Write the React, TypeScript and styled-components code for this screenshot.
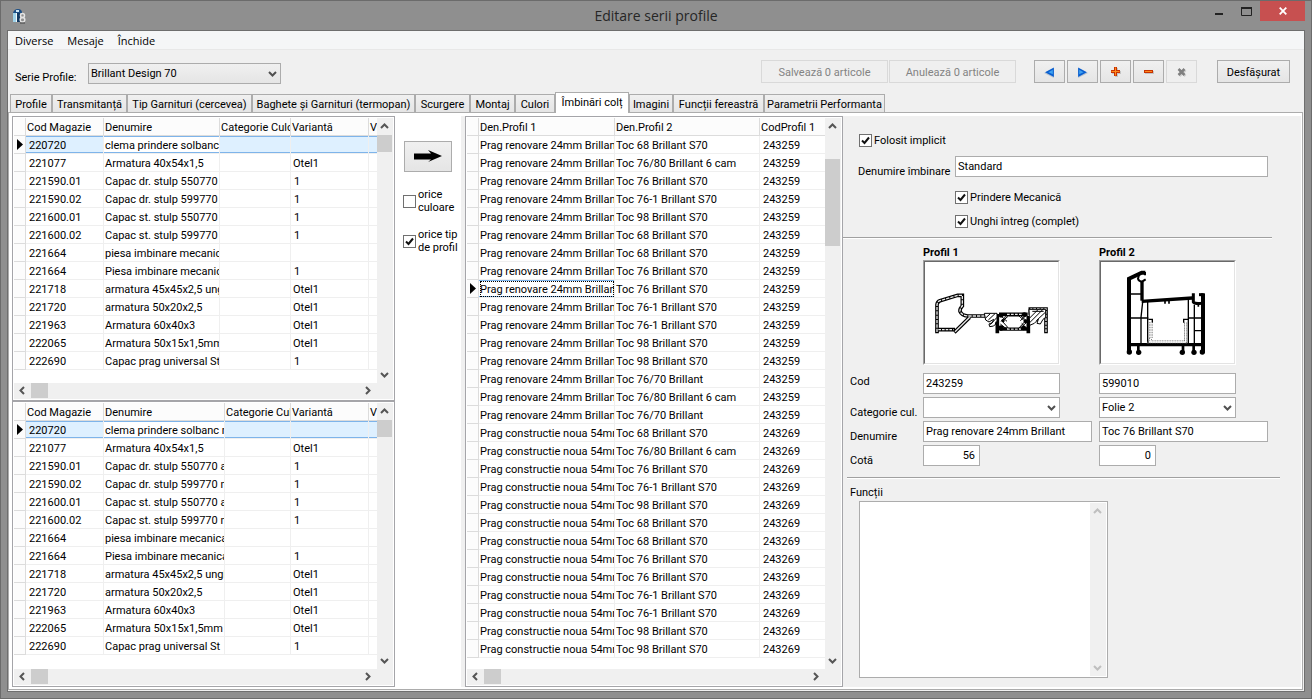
import React from 'react';
import styled, { createGlobalStyle, css } from 'styled-components';

const uiFont = 'Roboto, "Noto Sans", sans-serif';
const systemFont = '"Open Sans", "Noto Sans", sans-serif';

const GlobalStyle = createGlobalStyle`
  *, *::before, *::after { box-sizing: border-box; }
  body { margin: 0; background: #8f8f8f; color: #000; font: 11px/13px ${uiFont}; }
  button, input, select, textarea { font: inherit; color: inherit; margin: 0; border-radius: 0; outline: none; }
`;

/* ---------- window frame ---------- */

const Frame = styled.div`
  display: flex;
  flex-direction: column;
  min-height: 100vh;
  padding: 0 6px 6px;
  border: 1px solid #6b6b6b;
  background: #8f8f8f;
`;

const TitleBar = styled.header`
  display: grid;
  grid-template-columns: 1fr auto 1fr;
  align-items: center;
  height: 29px;
`;

const AppIcon = styled.svg`
  display: block;
  width: 16px;
  height: 16px;
  margin-left: 5px;
`;

const Title = styled.h1`
  margin: 0;
  font: 400 14px/20px ${systemFont};
  color: #262626;
`;

const WindowButtons = styled.div`
  display: flex;
  justify-self: end;
  align-self: start;
`;

const WindowButton = styled.button<{ $close?: boolean }>`
  display: flex;
  align-items: center;
  justify-content: center;
  width: ${p => (p.$close ? 45 : 27)}px;
  height: 20px;
  padding: 0;
  border: 0;
  background: ${p => (p.$close ? '#c75050' : 'transparent')};
`;

const Client = styled.div`
  flex: 1;
  display: flex;
  flex-direction: column;
  border: 1px solid #6e6e6e;
  background: #f0f0f0;
`;

const MenuBar = styled.nav`
  display: flex;
  gap: 14px;
  height: 19px;
  padding: 0 7px;
  background: #f5f6f7;
  border-bottom: 1px solid #e8e8e8;
`;

const MenuItem = styled.button`
  padding: 0;
  border: 0;
  background: none;
  font: 11px/19px ${systemFont};
`;

/* ---------- controls ---------- */

const Toolbar = styled.div`
  display: flex;
  align-items: flex-start;
  height: 44px;
  padding: 10px 14px 0 7px;
`;

const SeriesField = styled.div`
  display: flex;
  align-items: flex-start;
  flex: 1;
  padding-top: 3px;
`;

const SeriesLabel = styled.label`
  width: 73px;
  padding-top: 8px;
`;

const PushButton = styled.button<{ $width: number }>`
  width: ${p => p.$width}px;
  height: 23px;
  padding: 1px 0 0;
  border: 1px solid #acacac;
  background: linear-gradient(#f0f0f0, #e5e5e5);
  white-space: nowrap;
  &:disabled { border-color: #d9d9d9; background: #efefef; color: #838383; }
  svg { display: block; margin: 0 auto; }
`;

const ButtonGroup = styled.div<{ $gap: number; $after?: number }>`
  display: flex;
  gap: ${p => p.$gap}px;
  margin-right: ${p => p.$after || 0}px;
`;

const SelectBox = styled.span<{ $width: number; $flat?: boolean }>`
  position: relative;
  display: block;
  width: ${p => p.$width}px;
  height: 21px;
  select {
    display: block;
    appearance: none;
    width: 100%;
    height: 21px;
    padding: 0 20px 0 2px;
    border: 1px solid #acacac;
    background: ${p => (p.$flat ? '#fff' : 'linear-gradient(#f0f0f0, #e5e5e5)')};
  }
  svg { position: absolute; right: 4px; top: 6px; pointer-events: none; }
`;

const TextInput = styled.input<{ $width: number; $right?: boolean }>`
  display: block;
  width: ${p => p.$width}px;
  height: 21px;
  padding: 0 ${p => (p.$right ? 4 : 2)}px 0 2px;
  border: 1px solid #acacac;
  background: #fff;
  text-align: ${p => (p.$right ? 'right' : 'left')};
`;

const CheckLabel = styled.label`
  display: flex;
  align-items: center;
  gap: 2px;
`;

const CheckBox = styled.span`
  position: relative;
  flex: none;
  width: 13px;
  height: 13px;
  input {
    display: block;
    appearance: none;
    width: 13px;
    height: 13px;
    border: 1px solid #707070;
    background: #fff;
  }
  svg { position: absolute; left: 0; top: 0; pointer-events: none; visibility: hidden; }
  input:checked + svg { visibility: visible; }
`;

/* ---------- tabs ---------- */

const TabStrip = styled.div`
  display: flex;
  align-items: flex-end;
  height: 19px;
  padding-left: 2px;
  margin-bottom: -1px;
`;

const Tab = styled.button<{ $width: number; $active?: boolean }>`
  position: relative;
  flex: none;
  width: ${p => p.$width}px;
  height: 19px;
  padding: 1px 0 0;
  border: 1px solid #acacac;
  background: linear-gradient(#f0f0f0, #e5e5e5);
  white-space: nowrap;
  ${p => p.$active && css`
    height: 21px;
    padding: 0 0 2px;
    border-bottom: 0;
    background: #fff;
  `}
`;

const TabPage = styled.main`
  flex: 1;
  display: flex;
  margin: 0 1px 1px 0;
  padding: 3px 1px 2px 3px;
  border: 1px solid #acacac;
  background: #fff;
`;

/* ---------- data grids ---------- */

const Sidebar = styled.section`
  flex: none;
  display: grid;
  grid-template-rows: 285px minmax(285px, 1fr);
  width: 383px;
`;

const JointsPane = styled.section`
  flex: none;
  display: flex;
`;

const GridBox = styled.div<{ $width: number }>`
  flex: 1;
  display: flex;
  flex-direction: column;
  width: ${p => p.$width}px;
  padding: 1px;
  border: 1px solid #a5a5a9;
  background: #fff;
`;

const GridBody = styled.div`
  flex: 1;
  display: flex;
`;

const GridView = styled.div`
  flex: 1;
  min-width: 0;
  overflow: hidden;
`;

const Table = styled.table`
  width: 100%;
  table-layout: fixed;
  border-collapse: separate;
  border-spacing: 0;
`;

const cell = css`
  height: 18px;
  padding: 2px 0 0 2px;
  overflow: hidden;
  white-space: nowrap;
  text-align: left;
  font-weight: 400;
  line-height: 13px;
  &:last-child { border-right: 0; }
`;

const HeadCell = styled.th`
  ${cell}
  padding-left: 1px;
  background: #fcfcfc;
  border-right: 1px solid #dcdcdc;
  border-bottom: 1px solid #dcdcdc;
`;

const MarkCell = styled.td`
  ${cell}
  padding: 0 0 0 3px;
  background: #fcfcfc;
  border-right: 1px solid #dcdcdc;
  border-bottom: 1px solid #dcdcdc;
  svg { display: block; }
`;

const Cell = styled.td<{ $look?: 'row' | 'edge' | 'focus'; $pad?: number }>`
  ${cell}
  padding-left: ${p => p.$pad ?? 2}px;
  border-right: 1px solid #efefef;
  border-bottom: 1px solid #efefef;
  ${p => p.$look && css`
    box-shadow: inset 0 1px #7eb4ea, inset 0 -1px #7eb4ea;
  `}
  ${p => p.$look === 'row' && css`background: #def0ff;`}
  ${p => p.$look === 'focus' && css`
    outline: 1px dotted #000;
    outline-offset: -2px;
  `}
`;

const VBar = styled.div<{ $before: number }>`
  flex: none;
  display: flex;
  flex-direction: column;
  align-items: flex-start;
  width: 16px;
  background: #f0f0f0;
  .gap { flex: none; height: ${p => p.$before}px; }
  .rest { flex: 1; }
`;

const HBar = styled.div`
  flex: none;
  display: flex;
  align-items: flex-start;
  height: 16px;
  padding-right: 17px;
  background: #f0f0f0;
  .rest { flex: 1; }
`;

const ArrowBox = styled.span<{ $tall?: boolean }>`
  flex: none;
  display: flex;
  align-items: center;
  justify-content: center;
  width: ${p => (p.$tall ? 15 : 17)}px;
  height: ${p => (p.$tall ? 17 : 15)}px;
`;

const Thumb = styled.span<{ $w: number; $h: number }>`
  flex: none;
  width: ${p => p.$w}px;
  height: ${p => p.$h}px;
  background: #cdcdcd;
`;

/* ---------- transfer column ---------- */

const Transfer = styled.section`
  flex: none;
  display: flex;
  flex-direction: column;
  width: 66px;
  padding: 25px 0 0 8px;
  ${CheckLabel} { width: 58px; margin-bottom: 14px; }
`;

const MoveButton = styled.button`
  width: 48px;
  height: 31px;
  margin: 0 0 16px 1px;
  padding: 0;
  border: 1px solid #acacac;
  background: linear-gradient(#f0f0f0, #e5e5e5);
  svg { display: block; margin: 0 auto; }
`;

const Splitter = styled.div`
  flex: none;
  width: 4px;
  background: #f0f0f0;
`;

/* ---------- details ---------- */

const Details = styled.section`
  flex: 1;
  min-width: 440px;
  background: #f0f0f0;
`;

const JoinForm = styled.div`
  display: grid;
  grid-template-columns: 97px minmax(0, 313px);
  padding: 18px 33px 9px 15px;
  align-items: start;
`;

const JoinDefault = styled.div`
  grid-column: 1 / -1;
  padding: 0 0 9px 1px;
`;

const JoinChecks = styled.div`
  grid-column: 2;
  display: grid;
  gap: 11px;
  padding-top: 13px;
`;

const Rule = styled.hr<{ $left: number; $right: number }>`
  margin: 0 ${p => p.$right}px 0 ${p => p.$left}px;
  border: 0;
  height: 2px;
  border-top: 1px solid #a0a0a0;
  background: #fff;
`;

const ProfileForm = styled.div`
  display: grid;
  grid-template-columns: 73px 176px 169px;
  align-items: start;
  padding: 6px 0 8px 7px;
`;

const Caption = styled.h2`
  margin: 0;
  font: 700 11px/15px ${uiFont};
`;

const Picture = styled.div`
  width: 137px;
  height: 105px;
  margin-bottom: 8px;
  border: 1px solid;
  border-color: #a0a0a0 #fff #fff #a0a0a0;
  background: #fff;
  svg {
    display: block;
    width: 135px;
    height: 103px;
    border: 1px solid;
    border-color: #696969 #e3e3e3 #e3e3e3 #696969;
  }
`;

const FieldLabel = styled.label<{ $low?: boolean }>`
  padding-top: ${p => (p.$low ? 9 : 2)}px;
  white-space: nowrap;
`;

const FieldCell = styled.div`
  height: 24px;
`;

const Functions = styled.div`
  padding: 7px 0 0 7px;
`;

const MemoBox = styled.div`
  display: flex;
  width: 249px;
  height: 177px;
  margin: 2px 0 0 9px;
  padding: 1px;
  border: 1px solid #acacac;
  background: #fff;
  textarea { flex: 1; min-width: 0; border: 0; padding: 2px; resize: none; background: #fff; }
`;

/* ---------- drawings ---------- */

const arrowPaths = {
  up: 'M1 6 L4.5 2.5 L8 6',
  down: 'M1 3 L4.5 6.5 L8 3',
  left: 'M6 1 L2.5 4.5 L6 8',
  right: 'M3 1 L6.5 4.5 L3 8',
};

function Chevron({ dir, color = '#555' }: { dir: keyof typeof arrowPaths; color?: string }) {
  return (
    <svg width="9" height="9" viewBox="0 0 9 9" aria-hidden="true">
      <path d={arrowPaths[dir]} fill="none" stroke={color} strokeWidth="2" />
    </svg>
  );
}

function RowMarker() {
  return (
    <svg width="6" height="11" viewBox="0 0 6 11" aria-label="rând curent">
      <path d="M0 0 L6 5.5 L0 11 Z" />
    </svg>
  );
}

function ProfileOne() {
  return (
    <svg viewBox="30 18 399 303" role="img" aria-label="Secțiune Profil 1">
      <g fill="none" stroke="#000" strokeWidth="11" strokeLinejoin="miter">
        <path d="M66 232 V146 Q67 137 75 134 L128 118 H142 V150 Q134 158 135 166 Q140 178 158 180 H212" />
        <path d="M62 221 H120 M118 229 L164 184" />
        <path d="M247 232 V174 M340 232 V180 M252 175 H338 M254 219 H336" />
        <path d="M393 232 V159 H346 V176" />
      </g>
      <g fill="none" stroke="#e8e8e8" strokeWidth="4">
        <path d="M66 228 V146 Q67 137 75 134 L128 118 H142 V150 Q134 158 135 166 Q140 178 158 180 H212" strokeDasharray="10 3" />
        <path d="M70 221 H116" strokeDasharray="8 3" />
        <path d="M120 227 L164 184" />
        <path d="M393 228 V159 H346" strokeDasharray="8 3" />
        <path d="M276 175 H320 M276 219 H318" strokeDasharray="8 4" />
      </g>
      <g fill="#fff" stroke="#000" strokeWidth="3">
        <path d="M208 172 H246 V200 L236 210 L224 212 L222 204 L232 200 L236 190 L222 198 L212 192 Z" />
        <path d="M342 160 H392 V184 L384 190 L376 204 L366 202 L370 190 L358 202 L344 208 Z" />
        <path d="M262 196 L280 180 H312 L330 196 L312 216 H280 Z" />
      </g>
      <g fill="none" stroke="#000" strokeWidth="3">
        <path d="M220 192 L240 173 M226 206 L246 184 M212 186 L226 173" />
        <path d="M344 186 L370 160 M344 200 L384 160 M364 194 L392 168 M352 166 H386" />
        <path d="M258 180 L276 196 M276 178 L258 196 M256 204 L276 220 M318 180 L336 196 M334 178 L316 194 M316 216 L334 200 M320 202 L336 218" />
      </g>
      <g>
        <circle cx="258" cy="178" r="7" /><circle cx="264" cy="194" r="5" />
        <circle cx="258" cy="216" r="8" /><circle cx="328" cy="176" r="7" />
        <circle cx="332" cy="196" r="6" /><circle cx="326" cy="216" r="7" />
        <circle cx="246" cy="202" r="6" />
      </g>
    </svg>
  );
}

function ProfileTwo() {
  return (
    <svg viewBox="18 18 399 303" role="img" aria-label="Secțiune Profil 2">
      <g fill="none" stroke="#000">
        <path d="M102 290 V68 L140 50 H151" strokeWidth="12" />
        <path d="M150 48 V58 M132 56 L129 68 Q131 76 141 77 L152 70" strokeWidth="6" />
        <path d="M141 76 V134" strokeWidth="10" />
        <path d="M140 136 L292 126" strokeWidth="10" />
        <path d="M295 112 V138 Q298 144 322 142" strokeWidth="9" />
        <path d="M312 116 H326" strokeWidth="9" />
        <path d="M324 112 V290" strokeWidth="12" />
        <path d="M102 266 H324" strokeWidth="10" />
        <path d="M106 114 H140 M106 186 H160 M280 186 H322 M300 224 H322" strokeWidth="4" />
        <path d="M143 138 L138 184 V264 M158 138 V264 M280 130 V262 M298 146 V264" strokeWidth="4" />
        <path d="M210 132 V143 M222 132 V143 M310 144 V152" strokeWidth="5" />
        <path d="M160 190 H172 V200 M280 190 H266 V200" strokeWidth="4" />
        <path d="M168 198 V246 L162 258 H272 V198" strokeWidth="9" stroke="#555" strokeDasharray="3 2" />
        <path d="M168 198 V246 L164 258 H272 V198" strokeWidth="4" stroke="#fff" />
        <path d="M130 270 V290 M264 270 V290 M296 270 V290" strokeWidth="8" />
      </g>
      <g>
        <circle cx="103" cy="288" r="8" /><circle cx="131" cy="289" r="8" />
        <circle cx="262" cy="289" r="8" /><circle cx="297" cy="289" r="8" />
        <circle cx="322" cy="288" r="8" />
      </g>
    </svg>
  );
}

function Triangle({ flip }: { flip?: boolean }) {
  return (
    <svg width="11" height="11" viewBox="0 0 10 10" aria-hidden="true">
      <g transform={flip ? 'matrix(-1 0 0 1 10 0)' : undefined}>
        <path d="M1 1 L10 5.5 L1 10 Z" fill="#b9c4d0" />
        <path d="M1 0.500 L9 4.800 L1 9 Z" fill="#0a5fd0" />
        <path d="M2 2.5 L6 4.8 L2 6.5 Z" fill="#3ea2f2" />
      </g>
    </svg>
  );
}

function Plus() {
  return (
    <svg width="12" height="12" viewBox="0 0 12 12" aria-hidden="true">
      <path d="M5 2 H8 V5 H11 V8 H8 V11 H5 V8 H2 V5 H5 Z" fill="#c4c4c4" />
      <path d="M4 1 H7 V4 H10 V7 H7 V10 H4 V7 H1 V4 H4 Z" fill="#c83200" />
      <path d="M5 1.5 H6 V5 H9.500 V6 H6 V9.500 H5 V6 H1.500 V5 H5 Z" fill="#ff8a1e" />
    </svg>
  );
}

function Minus() {
  return (
    <svg width="12" height="12" viewBox="0 0 12 12" aria-hidden="true">
      <path d="M2 5 H11 V8 H2 Z" fill="#c4c4c4" />
      <path d="M1 4 H10 V7 H1 Z" fill="#c83200" />
      <path d="M2 5 H9 V6 H2 Z" fill="#ff8a1e" />
    </svg>
  );
}

function Cross() {
  return (
    <svg width="10" height="10" viewBox="0 0 10 10" aria-hidden="true">
      <path d="M2.500 3 L8.500 9 M8.500 3 L2.500 9" stroke="#cfcfcf" strokeWidth="2.500" />
      <path d="M1.500 2 L7.500 8 M7.500 2 L1.500 8" stroke="#808080" strokeWidth="2.500" />
    </svg>
  );
}

/* ---------- composite parts ---------- */

function Check({ on, children }: { on?: boolean; children: React.ReactNode }) {
  return (
    <CheckLabel>
      <CheckBox>
        <input type="checkbox" defaultChecked={on} />
        <svg width="13" height="13" viewBox="0 0 13 13" aria-hidden="true">
          <path d="M3 6.500 L5.500 9 L10 3.500" fill="none" stroke="#111" strokeWidth="2" />
        </svg>
      </CheckBox>
      <span>{children}</span>
    </CheckLabel>
  );
}

function Select({ id, width, flat, value }: { id: string; width: number; flat?: boolean; value: string }) {
  return (
    <SelectBox $width={width} $flat={flat}>
      <select id={id} defaultValue={value} aria-label={id}>
        <option value={value}>{value}</option>
      </select>
      <Chevron dir="down" color="#505050" />
    </SelectBox>
  );
}

type GridProps = {
  width: number;
  columns: number[];
  heads: string[];
  rows: string[][];
  current: number;
  focusCell?: boolean;
  before: number;
  thumb: number;
};

function Grid({ width, columns, heads, rows, current, focusCell, before, thumb }: GridProps) {
  const look = (row: number, col: number) => {
    if (row !== current) return undefined;
    if (focusCell) return col === 0 ? 'focus' : undefined;
    return col === 1 ? 'edge' : 'row';
  };
  return (
    <GridBox $width={width}>
      <GridBody>
        <GridView>
          <Table>
            <colgroup>
              <col style={{ width: 12 }} />
              {columns.map((w, i) => <col key={i} style={{ width: w }} />)}
              <col />
            </colgroup>
            <thead>
              <tr>
                <HeadCell aria-label="rând" />
                {heads.map(h => <HeadCell key={h}>{h}</HeadCell>)}
              </tr>
            </thead>
            <tbody>
              {rows.map((row, r) => (
                <tr key={r}>
                  <MarkCell>{r === current && <RowMarker />}</MarkCell>
                  {row.map((text, c) => (
                    <Cell
                      key={c}
                      $look={look(r, c)}
                      $pad={focusCell ? (c === 2 ? 3 : 1) : c === 0 ? 3 : text === '1' ? 3 : c === 1 ? 1 : 2}
                    >
                      {text}
                    </Cell>
                  ))}
                </tr>
              ))}
            </tbody>
          </Table>
        </GridView>
        <VBar $before={before}>
          <ArrowBox $tall><Chevron dir="up" /></ArrowBox>
          <span className="gap" />
          <Thumb $w={15} $h={thumb} />
          <span className="rest" />
          <ArrowBox $tall><Chevron dir="down" /></ArrowBox>
        </VBar>
      </GridBody>
      <HBar>
        <ArrowBox><Chevron dir="left" /></ArrowBox>
        <Thumb $w={17} $h={15} />
        <span className="rest" />
        <ArrowBox><Chevron dir="right" /></ArrowBox>
      </HBar>
    </GridBox>
  );
}

/* ---------- data ---------- */

const tabs: [string, number][] = [
  ['Profile', 42], ['Transmitanță', 75], ['Tip Garnituri (cercevea)', 125],
  ['Baghete și Garnituri (termopan)', 163], ['Scurgere', 55], ['Montaj', 45], ['Culori', 40],
  ['Îmbinări colț', 74], ['Imagini', 44], ['Funcții fereastră', 91], ['Parametrii Performanta', 121],
];

const stockHeads = ['Cod Magazie', 'Denumire', 'Categorie Culoare', 'Variantă', 'V'];

const stock: string[][] = [
  ['220720', 'clema prindere solbanc nou', '', '', ''],
  ['221077', 'Armatura 40x54x1,5', '', 'Otel1', ''],
  ['221590.01', 'Capac dr. stulp 550770 alb', '', '1', ''],
  ['221590.02', 'Capac dr. stulp 599770 maro', '', '1', ''],
  ['221600.01', 'Capac st. stulp 550770 alb', '', '1', ''],
  ['221600.02', 'Capac st. stulp 599770 maro', '', '1', ''],
  ['221664', 'piesa imbinare mecanica', '', '', ''],
  ['221664', 'Piesa imbinare mecanica', '', '1', ''],
  ['221718', 'armatura 45x45x2,5 unghi', '', 'Otel1', ''],
  ['221720', 'armatura 50x20x2,5', '', 'Otel1', ''],
  ['221963', 'Armatura 60x40x3', '', 'Otel1', ''],
  ['222065', 'Armatura 50x15x1,5mm', '', 'Otel1', ''],
  ['222690', 'Capac prag universal St', '', '1', ''],
];

const renovare = [
  'Toc 68 Brillant S70', 'Toc 76/80 Brillant 6 cam', 'Toc 76 Brillant S70', 'Toc 76-1 Brillant S70',
  'Toc 98 Brillant S70', 'Toc 68 Brillant S70', 'Toc 68 Brillant S70', 'Toc 76 Brillant S70',
  'Toc 76 Brillant S70', 'Toc 76-1 Brillant S70', 'Toc 76-1 Brillant S70', 'Toc 98 Brillant S70',
  'Toc 98 Brillant S70', 'Toc 76/70 Brillant', 'Toc 76/80 Brillant 6 cam', 'Toc 76/70 Brillant',
];

const constructie = [
  'Toc 68 Brillant S70', 'Toc 76/80 Brillant 6 cam', 'Toc 76 Brillant S70', 'Toc 76-1 Brillant S70',
  'Toc 98 Brillant S70', 'Toc 68 Brillant S70', 'Toc 68 Brillant S70', 'Toc 76 Brillant S70',
  'Toc 76 Brillant S70', 'Toc 76-1 Brillant S70', 'Toc 76-1 Brillant S70', 'Toc 98 Brillant S70',
  'Toc 98 Brillant S70',
];

const joints: string[][] = [
  ...renovare.map(name => ['Prag renovare 24mm Brillant', name, '243259']),
  ...constructie.map(name => ['Prag constructie noua 54mm', name, '243269']),
];

export default function App() {
  return (
    <>
      <GlobalStyle />
      <Frame>
        <TitleBar>
          <AppIcon viewBox="0 0 16 16" aria-hidden="true">
            <path d="M1 5 Q2 1 6 1 Q10 1 10 5 Z" fill="#1c4f86" />
            <path d="M4 2 H7 V4 H4 Z" fill="#cfe9f7" />
            <path d="M1 5 H4 V14 H1 Z" fill="#9fd3ea" />
            <path d="M5 5 H8 V14 H5 Z" fill="#123a63" />
            <path d="M4 5 H5 V14 H4 Z" fill="#f2f8fb" />
            <g fill="none" stroke="#e4e4e4" strokeWidth="1.500">
              <circle cx="10.500" cy="7.500" r="2" /><circle cx="10.500" cy="11.800" r="2.300" />
            </g>
            <path d="M8 15 H13" stroke="#444" />
          </AppIcon>
          <Title>Editare serii profile</Title>
          <WindowButtons>
            <WindowButton aria-label="Minimizare">
              <svg width="9" height="9" viewBox="0 0 9 9"><path d="M0 6 H8 V8 H0 Z" fill="#222" /></svg>
            </WindowButton>
            <WindowButton aria-label="Maximizare">
              <svg width="11" height="9" viewBox="0 0 11 9">
                <path d="M0.500 1 H10.500 V8.500 H0.500 Z" fill="none" stroke="#222" />
                <path d="M0 0 H11 V2 H0 Z" fill="#222" />
              </svg>
            </WindowButton>
            <WindowButton $close aria-label="Închidere">
              <svg width="8" height="8" viewBox="0 0 8 8">
                <path d="M0.700 0.700 L7.300 7.300 M7.300 0.700 L0.700 7.300" stroke="#fff" strokeWidth="1.800" />
              </svg>
            </WindowButton>
          </WindowButtons>
        </TitleBar>

        <Client>
          <MenuBar>
            <MenuItem>Diverse</MenuItem>
            <MenuItem>Mesaje</MenuItem>
            <MenuItem>Închide</MenuItem>
          </MenuBar>

          <Toolbar>
            <SeriesField>
              <SeriesLabel htmlFor="serie">Serie Profile:</SeriesLabel>
              <Select id="serie" width={193} value="Brillant Design 70" />
            </SeriesField>
            <ButtonGroup $gap={1} $after={18}>
              <PushButton $width={127} disabled>Salvează 0 articole</PushButton>
              <PushButton $width={127} disabled>Anulează 0 articole</PushButton>
            </ButtonGroup>
            <ButtonGroup $gap={2} $after={20}>
              <PushButton $width={31} aria-label="Înapoi"><Triangle flip /></PushButton>
              <PushButton $width={31} aria-label="Înainte"><Triangle /></PushButton>
              <PushButton $width={31} aria-label="Adaugă"><Plus /></PushButton>
              <PushButton $width={31} aria-label="Șterge"><Minus /></PushButton>
              <PushButton $width={31} aria-label="Renunță" disabled><Cross /></PushButton>
            </ButtonGroup>
            <PushButton $width={73}>Desfășurat</PushButton>
          </Toolbar>

          <TabStrip role="tablist">
            {tabs.map(([name, width], i) => (
              <Tab key={name} role="tab" aria-selected={i === 7} $width={width} $active={i === 7}>{name}</Tab>
            ))}
          </TabStrip>

          <TabPage>
            <Sidebar>
              <Grid width={383} columns={[78, 116, 71, 78]} heads={stockHeads} rows={stock} current={0} before={0} thumb={17} />
              <Grid width={383} columns={[78, 121, 66, 78]} heads={stockHeads} rows={stock} current={0} before={0} thumb={17} />
            </Sidebar>

            <Transfer>
              <MoveButton aria-label="Adaugă îmbinare">
                <svg width="28" height="13" viewBox="0 0 28 13">
                  <path d="M0 3.500 H17 L14 0 L28 6 L14 12 L17 9.500 H0 Z" />
                </svg>
              </MoveButton>
              <Check>orice culoare</Check>
              <Check on>orice tip de profil</Check>
            </Transfer>
            <Splitter />

            <JointsPane>
              <Grid
                width={378}
                columns={[136, 145]}
                heads={['Den.Profil 1', 'Den.Profil 2', 'CodProfil 1']}
                rows={joints}
                current={8}
                focusCell
                before={24}
                thumb={87}
              />
            </JointsPane>

            <Details>
              <JoinForm>
                <JoinDefault><Check on>Folosit implicit</Check></JoinDefault>
                <FieldLabel htmlFor="imbinare" $low>Denumire îmbinare</FieldLabel>
                <TextInput id="imbinare" $width={313} defaultValue="Standard" />
                <JoinChecks>
                  <Check on>Prindere Mecanică</Check>
                  <Check on>Unghi întreg (complet)</Check>
                </JoinChecks>
              </JoinForm>
              <Rule $left={0} $right={29} />
              <ProfileForm>
                <span />
                <Caption>Profil 1</Caption>
                <Caption>Profil 2</Caption>
                <span />
                <Picture><ProfileOne /></Picture>
                <Picture><ProfileTwo /></Picture>

                <FieldLabel htmlFor="cod1">Cod</FieldLabel>
                <FieldCell><TextInput id="cod1" $width={137} defaultValue="243259" /></FieldCell>
                <FieldCell><TextInput aria-label="Cod Profil 2" $width={137} defaultValue="599010" /></FieldCell>

                <FieldLabel htmlFor="categorie1" $low>Categorie cul.</FieldLabel>
                <FieldCell><Select id="categorie1" width={137} flat value="" /></FieldCell>
                <FieldCell><Select id="categorie2" width={137} flat value="Folie 2" /></FieldCell>

                <FieldLabel htmlFor="denumire1" $low>Denumire</FieldLabel>
                <FieldCell><TextInput id="denumire1" $width={169} defaultValue="Prag renovare 24mm Brillant" /></FieldCell>
                <FieldCell><TextInput aria-label="Denumire Profil 2" $width={169} defaultValue="Toc 76 Brillant S70" /></FieldCell>

                <FieldLabel htmlFor="cota1" $low>Cotă</FieldLabel>
                <FieldCell><TextInput id="cota1" $width={57} $right defaultValue="56" /></FieldCell>
                <FieldCell><TextInput aria-label="Cotă Profil 2" $width={57} $right defaultValue="0" /></FieldCell>
              </ProfileForm>
              <Rule $left={4} $right={21} />
              <Functions>
                <label htmlFor="functii">Funcții</label>
                <MemoBox>
                  <textarea id="functii" />
                  <VBar $before={0}>
                    <ArrowBox $tall><Chevron dir="up" color="#bfbfbf" /></ArrowBox>
                    <span className="rest" />
                    <ArrowBox $tall><Chevron dir="down" color="#bfbfbf" /></ArrowBox>
                  </VBar>
                </MemoBox>
              </Functions>
            </Details>
          </TabPage>
        </Client>
      </Frame>
    </>
  );
}
